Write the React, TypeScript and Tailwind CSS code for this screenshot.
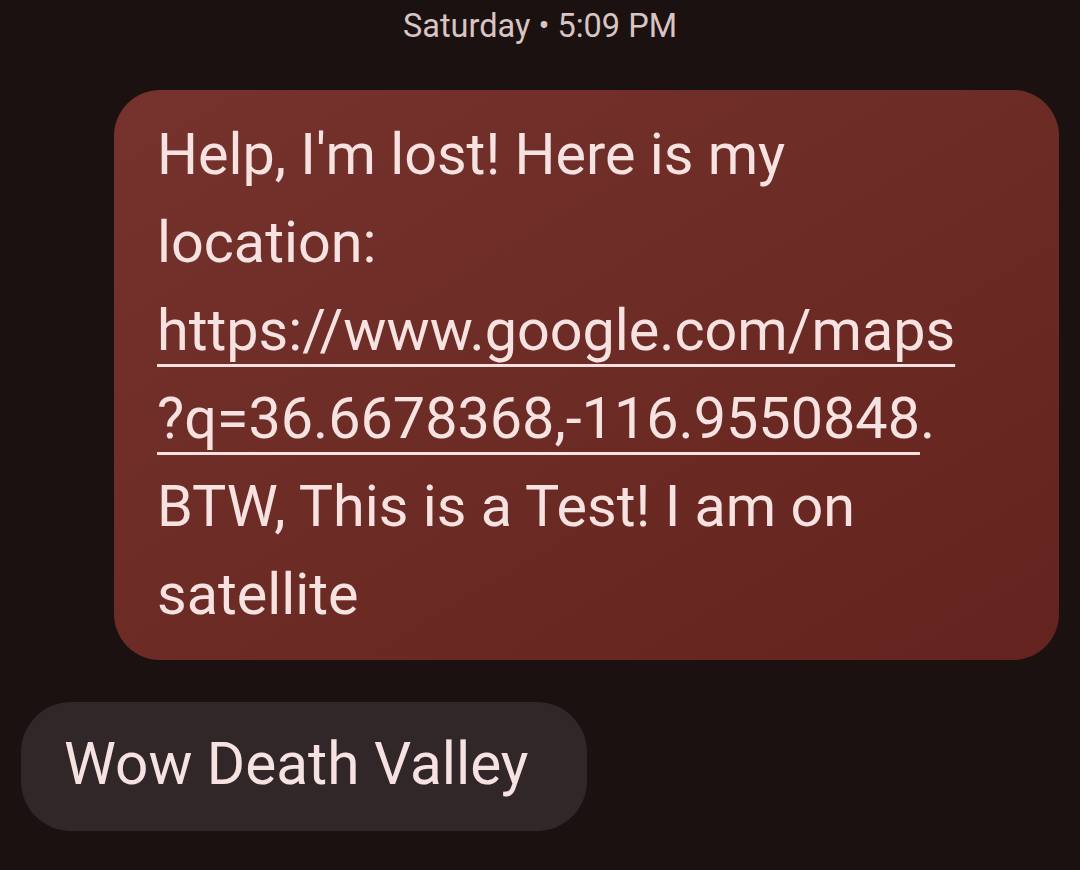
import React from "react";

export default function App() {
  return (
    <div
      className="w-[1080px] h-[870px] bg-[#1b1110] overflow-hidden flex flex-col"
      style={{ fontFamily: "Roboto, 'Noto Sans', sans-serif" }}
    >
      <div className="h-[52px] flex items-center justify-center text-[32.5px] text-[#d8c4c2]">
        Saturday • 5:09 PM
      </div>
      <div className="flex justify-end pr-[21px] mt-[38px]">
        <div className="w-[945px] h-[570px] rounded-[46px] bg-gradient-to-br from-[#76332d] to-[#64231e] pl-[43px] pt-[21px] text-[#f6e2e1] text-[57.5px] leading-[88px]">
          <div>Help, I'm lost! Here is my</div>
          <div>location:</div>
          <div>
            <span className="underline decoration-[3px] underline-offset-[14px]">
              https://www.google.com/maps
            </span>
          </div>
          <div>
            <span className="underline decoration-[3px] underline-offset-[14px]">
              ?q=36.6678368,-116.9550848
            </span>
            .
          </div>
          <div>BTW, This is a Test! I am on</div>
          <div>satellite</div>
        </div>
      </div>
      <div className="flex pl-[21px] mt-[42px]">
        <div className="w-[566px] h-[129px] rounded-[50px] bg-[#312628] pl-[43px] pb-[4px] flex items-center text-[#f6e2e1] text-[58.5px]">
          Wow Death Valley
        </div>
      </div>
    </div>
  );
}
